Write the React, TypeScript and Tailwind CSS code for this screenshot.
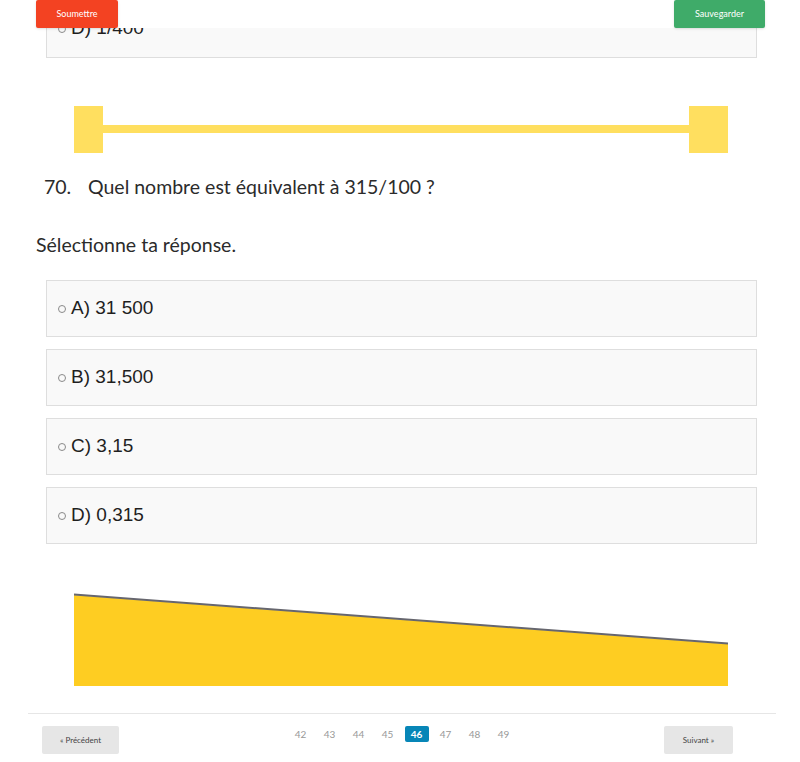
const options = ["A) 31 500", "B) 31,500", "C) 3,15", "D) 0,315"]
const pages = [42, 43, 44, 45, 46, 47, 48, 49]

const muli = { fontFamily: "Lato, 'Open Sans', sans-serif" }

function Option({ label }: { label: string }) {
  return (
    <div className="flex h-[57px] items-center border border-[#dedede] bg-[#f9f9f9] pl-[11px] text-[19px] text-[#1f1f1f] font-['Liberation_Sans',Arial,sans-serif]">
      <span className="mr-[5px] inline-block h-[8px] w-[8px] rounded-full border border-[#8a8a8a]" />
      <span>{label}</span>
    </div>
  )
}

export default function App() {
  return (
    <div className="h-[762px] w-[800px] overflow-hidden bg-white" style={muli}>
      <div className="flex h-[28px] items-start justify-between bg-white pl-[36px] pr-[35px]">
        <button className="h-[28px] w-[82px] rounded-[2px] bg-[#f34222] text-[9px] text-white shadow-sm">
          Soumettre
        </button>
        <button className="h-[28px] w-[91px] rounded-[2px] bg-[#3fab69] text-[9px] text-white shadow-sm">
          Sauvegarder
        </button>
      </div>

      <div className="ml-[46px] h-[30px] w-[711px] overflow-hidden border-x border-b border-[#dedede] bg-[#f9f9f9]">
        <div className="-mt-[28px]">
          <div className="flex h-[57px] items-center pl-[11px] text-[19px] text-[#1f1f1f] font-['Liberation_Sans',Arial,sans-serif]">
            <span className="mr-[5px] inline-block h-[8px] w-[8px] rounded-full border border-[#8a8a8a]" />
            <span>D) 1/400</span>
          </div>
        </div>
      </div>

      <div className="mt-[48px] pl-[74px]">
        <svg width="654" height="47" viewBox="0 0 654 47">
          <rect x="0" y="0" width="29" height="47" fill="#ffdf5f" />
          <rect x="615" y="0" width="39" height="47" fill="#ffdf5f" />
          <rect x="29" y="19" width="586" height="8" fill="#ffdf5f" />
        </svg>
      </div>

      <div className="mt-[20px] flex pl-[44px] text-[19.5px] leading-[28px] text-[#2b2b2b]">
        <span className="w-[44px]">70.</span>
        <span>Quel nombre est équivalent à 315/100 ?</span>
      </div>

      <div className="mt-[30px] pl-[36px] text-[19.5px] leading-[28px] text-[#2b2b2b]">
        Sélectionne ta réponse.
      </div>

      <div className="ml-[46px] mt-[21px] flex w-[711px] flex-col gap-[12px]">
        {options.map((o) => (
          <Option key={o} label={o} />
        ))}
      </div>

      <div className="mt-[49px] pl-[74px]">
        <svg width="654" height="94" viewBox="0 0 654 94">
          <polygon points="0,2 654,51 654,93 0,93" fill="#fecd22" />
          <line x1="0" y1="1.5" x2="654" y2="50.5" stroke="#66666e" strokeWidth="2" />
        </svg>
      </div>

      <div className="ml-[28px] mt-[26px] w-[748px] border-t border-[#e6e6e6]" />

      <div className="mt-[12px] flex items-start pl-[42px]">
        <button className="h-[28px] w-[77px] rounded-[2px] bg-[#e6e6e6] text-[8px] text-[#444]">
          « Précédent
        </button>
        <div className="ml-[167px] flex items-center text-[10px] text-[#999]">
          {pages.map((p) => (
            <span key={p} className="flex h-[16px] w-[29px] items-center justify-center">
              {p === 46 ? (
                <span className="flex h-[16px] w-[24px] items-center justify-center rounded-[2px] bg-[#0786b7] font-bold text-white">
                  {p}
                </span>
              ) : (
                p
              )}
            </span>
          ))}
        </div>
        <button className="ml-[146px] h-[28px] w-[69px] rounded-[2px] bg-[#e6e6e6] text-[8px] text-[#444]">
          Suivant »
        </button>
      </div>
    </div>
  )
}
